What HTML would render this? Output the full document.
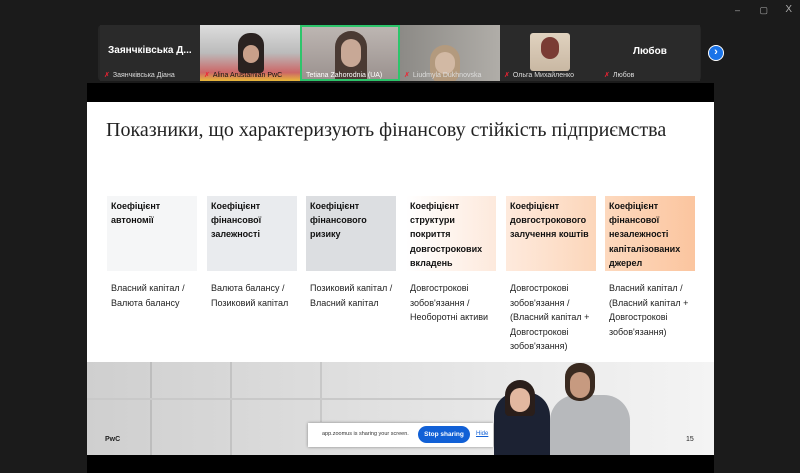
<!DOCTYPE html>
<html><head><meta charset="utf-8"><style>
*{margin:0;padding:0;box-sizing:border-box}
body{width:800px;height:473px;background:#1b1b1b;overflow:hidden;position:relative;font-family:"Liberation Sans",sans-serif}
.a{position:absolute}
.tile{position:absolute;top:25px;height:56px;width:100px;background:#2a2a2a;overflow:hidden}
.nm{position:absolute;left:4px;bottom:2px;font-size:7px;color:#ddd;white-space:nowrap}
.nm b{color:#e23;font-weight:normal;margin-right:3px}
.box{position:absolute;top:196px;width:90px;height:75px;padding:3px 4px;font-size:9px;font-weight:bold;line-height:14.2px;color:#111}
.t{position:absolute;top:281px;width:96px;font-size:9px;line-height:14.5px;color:#222}
</style></head><body>
<div class="a" style="right:60px;top:5px;color:#aaa;font-size:9px">–</div>
<div class="a" style="right:32px;top:5px;color:#aaa;font-size:9px">▢</div>
<div class="a" style="right:8px;top:4px;color:#aaa;font-size:10px">X</div>

<div class="a" style="left:98px;top:25px;width:603px;height:56px;background:#262626;border-radius:4px"></div>
<div class="tile" style="left:100px;background:#2a2a2a"><div class="a" style="left:8px;top:20px;color:#fff;font-weight:bold;font-size:10px">Заянчківська Д...</div><div class="nm"><b>✗</b>Заянчківська Діана</div></div>
<div class="tile" style="left:200px;background:linear-gradient(#ddd,#bbb 50%,#c66 85%,#e9b93a)"><div class="a" style="left:38px;top:8px;width:26px;height:40px;background:#2a2220;border-radius:12px 12px 4px 4px"></div><div class="a" style="left:43px;top:20px;width:16px;height:18px;background:#c9a08a;border-radius:8px"></div><div class="nm" style="color:#111"><b>✗</b>Alina Arustamian PwC</div></div>
<div class="tile" style="left:300px;background:linear-gradient(#bdb6b2,#9b928f);border:2px solid #2dc56b"><div class="a" style="left:33px;top:4px;width:32px;height:52px;background:#4a3a33;border-radius:16px 16px 0 0"></div><div class="a" style="left:39px;top:12px;width:20px;height:28px;background:#c8a896;border-radius:10px"></div><div class="nm" style="color:#fff;bottom:0">Tetiana Zahorodnia (UA)</div></div>
<div class="tile" style="left:400px;background:linear-gradient(90deg,#8c8a86,#b0ada8)"><div class="a" style="left:30px;top:20px;width:30px;height:40px;background:#b39a7e;border-radius:15px"></div><div class="a" style="left:35px;top:27px;width:20px;height:22px;background:#d2b9a4;border-radius:10px"></div><div class="nm"><b>✗</b>Liudmyla Dukhnovska</div></div>
<div class="tile" style="left:500px"><div class="a" style="left:30px;top:8px;width:40px;height:38px;background:linear-gradient(#e0d2bf,#c9b8a3);border-radius:3px"></div><div class="a" style="left:41px;top:12px;width:18px;height:22px;background:#7a3c34;border-radius:9px"></div><div class="nm"><b>✗</b>Ольга Михайленко</div></div>
<div class="tile" style="left:600px"><div class="a" style="left:33px;top:21px;color:#fff;font-weight:bold;font-size:10px">Любов</div><div class="nm"><b>✗</b>Любов</div></div>
<div class="a" style="left:708px;top:45px;width:16px;height:16px;border-radius:50%;background:#1a73e8;border:1.5px solid #fff;color:#fff;font-size:11px;font-weight:bold;line-height:12px;text-align:center">›</div>

<div class="a" style="left:87px;top:83px;width:627px;height:19px;background:#000"></div>
<div class="a" style="left:87px;top:102px;width:627px;height:260px;background:#fff"></div>
<div class="a" style="left:106px;top:119px;font-family:'Liberation Serif',serif;font-size:20px;color:#222;white-space:nowrap">Показники, що характеризують фінансову стійкість підприємства</div>

<div class="box" style="left:107px;background:#f5f6f7">Коефіцієнт<br>автономії</div>
<div class="box" style="left:207px;background:#e9ebee">Коефіцієнт<br>фінансової<br>залежності</div>
<div class="box" style="left:306px;background:#dcdee1">Коефіцієнт<br>фінансового<br>ризику</div>
<div class="box" style="left:406px;background:linear-gradient(90deg,#fff,#fde9dc)">Коефіцієнт<br>структури<br>покриття<br>довгострокових<br>вкладень</div>
<div class="box" style="left:506px;background:linear-gradient(90deg,#feeadd,#fcd6ba)">Коефіцієнт<br>довгострокового<br>залучення коштів</div>
<div class="box" style="left:605px;background:linear-gradient(90deg,#fdd9be,#fbc59f)">Коефіцієнт<br>фінансової<br>незалежності<br>капіталізованих<br>джерел</div>

<div class="t" style="left:111px">Власний капітал /<br>Валюта балансу</div>
<div class="t" style="left:211px">Валюта балансу /<br>Позиковий капітал</div>
<div class="t" style="left:310px">Позиковий капітал /<br>Власний капітал</div>
<div class="t" style="left:410px">Довгострокові<br>зобов'язання /<br>Необоротні активи</div>
<div class="t" style="left:510px">Довгострокові<br>зобов'язання /<br>(Власний капітал +<br>Довгострокові<br>зобов'язання)</div>
<div class="t" style="left:609px">Власний капітал /<br>(Власний капітал +<br>Довгострокові<br>зобов'язання)</div>

<div class="a" style="left:87px;top:362px;width:627px;height:93px;background:linear-gradient(90deg,#cfcfcf,#dedede 40%,#e8e8e8 65%,#f4f4f4)"></div>
<div class="a" style="left:150px;top:362px;width:2px;height:93px;background:#bdbdbd"></div>
<div class="a" style="left:230px;top:362px;width:2px;height:93px;background:#c3c3c3"></div>
<div class="a" style="left:320px;top:362px;width:2px;height:60px;background:#c8c8c8"></div>
<div class="a" style="left:87px;top:398px;width:430px;height:2px;background:#c9c9c9"></div>
<div class="a" style="left:494px;top:392px;width:56px;height:63px;background:#1c2233;border-radius:24px 24px 0 0"></div>
<div class="a" style="left:505px;top:380px;width:30px;height:36px;background:#2a1e1a;border-radius:15px 15px 4px 4px"></div>
<div class="a" style="left:510px;top:388px;width:20px;height:24px;background:#e2b8a0;border-radius:10px"></div>
<div class="a" style="left:550px;top:395px;width:80px;height:60px;background:#b7b9bc;border-radius:26px 26px 0 0"></div>
<div class="a" style="left:565px;top:363px;width:30px;height:38px;background:#3a2a20;border-radius:14px"></div>
<div class="a" style="left:570px;top:372px;width:20px;height:26px;background:#c79a80;border-radius:10px"></div>
<div class="a" style="left:105px;top:436px;font-size:7px;font-weight:bold;color:#222">PwC</div>
<div class="a" style="left:686px;top:436px;font-size:7px;color:#222">15</div>
<div class="a" style="left:308px;top:423px;width:185px;height:24px;background:#fff;box-shadow:0 0 3px rgba(0,0,0,.4)"></div>
<div class="a" style="left:322px;top:431px;font-size:5.5px;color:#333">app.zoomus is sharing your screen.</div>
<div class="a" style="left:418px;top:426px;width:52px;height:17px;border-radius:9px;background:#1160d6;color:#fff;font-size:6.5px;font-weight:bold;text-align:center;line-height:17px">Stop sharing</div>
<div class="a" style="left:476px;top:431px;font-size:6px;color:#1160d6;text-decoration:underline">Hide</div>
<div class="a" style="left:87px;top:455px;width:627px;height:18px;background:#000"></div>
</body></html>
